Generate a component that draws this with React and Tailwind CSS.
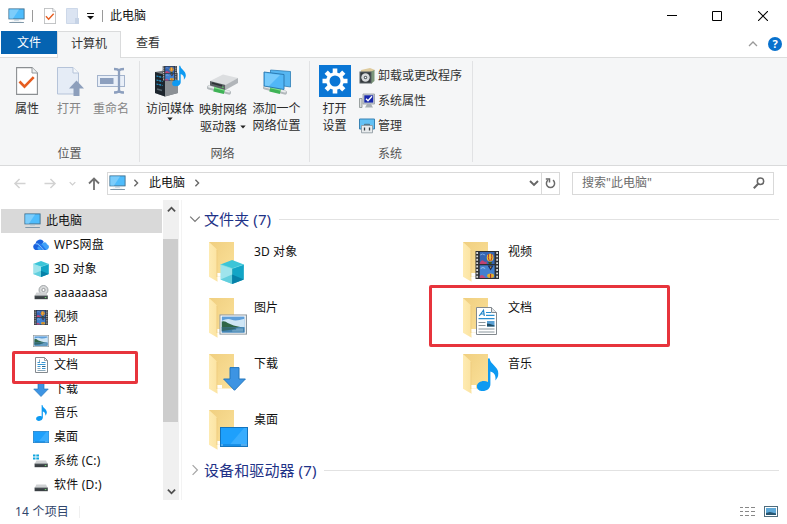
import React from "react";

const FONT =
  "font-['Noto_Sans','Noto_Sans_CJK_SC',sans-serif]";

/* ---------- Artwork ---------- */

function Monitor({ className }) {
  return (
    <svg className={className} viewBox="0 0 17 16" preserveAspectRatio="none">
      <rect x="0.9" y="0.9" width="15.2" height="10" fill="#4ebcfc" stroke="#41708f" strokeWidth="0.9" />
      <path d="M1.4 10.4V1.4H11L5 10.4Z" fill="#7dcdfb" />
      <path d="M6.5 11.5h4l.5 1h-5z" fill="#9ab7cb" />
      <path d="M1.3 14.500h14.6" stroke="#7f97a8" strokeWidth="1" />
      <path d="M3.6 13.1h9.8" stroke="#d7dfe4" strokeWidth="0.6" />
    </svg>
  );
}

function Cube(props) {
  return (
    <svg viewBox="0 0 24 24" {...props}>
      <path d="M0.3 4.4 12 0l11.7 4.4L12 8.5Z" fill="#3cc5d8" />
      <path d="M0.3 4.4 12 8.5V24L0.3 19.5Z" fill="#9fe4ec" />
      <path d="M0.3 19.5 12 14.5V24Z" fill="#62cfde" />
      <path d="M23.7 4.4 12 8.5V24l11.7-4.5Z" fill="#12a5c6" />
      <path d="M12 14.5l11.7 5L12 24Z" fill="#0781a8" />
      <path d="M0.3 4.4 12 8.5l11.7-4.1" stroke="#6adbe7" strokeWidth=".6" fill="none" />
    </svg>
  );
}

function Picture(props) {
  return (
    <svg viewBox="0 0 28 21" preserveAspectRatio="none" {...props}>
      <rect x=".6" y=".6" width="26.800" height="19.800" fill="#fff" stroke="#8c969d" strokeWidth="1.200" />
      <rect x="2.500" y="2.300" width="23" height="16.400" fill="#5f9fda" />
      <path d="M2.500 6.500q6-3 10-1t13-1V13h-23Z" fill="#cfe6f5" />
      <path d="M2.500 7.500q3.500-1 6 1.500l6 2.500 9 2h-21Z" fill="#2f6545" />
      <path d="M2.500 13.200h23v5.500h-23Z" fill="#4484b0" />
      <path d="M2.500 13l17 .6-6 2-11 1.400Z" fill="#34696c" />
      <path d="M13 17h11M17 15.200h7" stroke="#b8d7e5" strokeWidth=".6" />
    </svg>
  );
}

function DownArrow(props) {
  return (
    <svg viewBox="0 0 24 24" {...props}>
      <path d="M7.5.6h9V12h6.4L12 23.3 1.1 12h6.4Z" fill="#3d94e3" stroke="#2276bd" strokeWidth="1" />
    </svg>
  );
}

function Desktop(props) {
  return (
    <svg viewBox="0 0 28 20" preserveAspectRatio="none" {...props}>
      <rect x=".5" y=".5" width="27" height="19" fill="#1ea0fc" stroke="#1474bd" />
      <path d="M10 17.5 24 1h3v16.5Z" fill="#39adfe" />
      <path d="M1 18h26" stroke="#0f7dd2" />
      <path d="M1.5 18h1M21.5 18h1M23.5 18h1M25.5 18h1" stroke="#fff" />
    </svg>
  );
}

function Film(props) {
  return (
    <svg viewBox="0 0 24 28" preserveAspectRatio="none" {...props}>
      <rect width="24" height="28" fill="#2d2f33" />
      <path d="M1.900 1v26.500M22.100 1v26.500" stroke="#d9dbdc" strokeWidth="1.800" strokeDasharray="1.900 1.500" />
      <rect x="4.500" y="1" width="15" height="12" fill="#3565b4" />
      <rect x="4.500" y="14.300" width="15" height="12.700" fill="#4380cf" />
      <path d="M4.500 12q2-4 4-2t3 0v3h-7Z" fill="#c04272" />
      <path d="M5 4q2-2 5 0" stroke="#7ea8dd" fill="none" />
      <ellipse cx="15" cy="6.500" rx="3.400" ry="4" fill="#eec23a" />
      <path d="M13.500 3q-1 4 .8 7M16.500 3q1 4-.8 7" stroke="#b5342c" fill="none" />
      <path d="M13 11h4l-.8 2h-2.400Z" fill="#39551f" />
      <path d="M12.500 14.500h6l-3 5Z" fill="#1c2b58" />
      <path d="M14.500 15.500h2l-1 2Z" fill="#d59b38" />
      <ellipse cx="15.500" cy="24.800" rx="3.500" ry="2.200" fill="#e4ae2e" />
      <path d="M15.500 23v4" stroke="#a3262b" />
      <path d="M4.500 25q3-3 6 2h-6Z" fill="#c24b7a" />
      <path d="M5.500 17.500q2-2 4.500 0" stroke="#9fc4ec" fill="none" />
    </svg>
  );
}

function Doc(props) {
  return (
    <svg viewBox="0 0 21 28" preserveAspectRatio="none" {...props}>
      <path d="M.5.5h15l5 5v22H.5Z" fill="#fff" stroke="#83898e" />
      <path d="M15.5.5v5h5" fill="#e5e8ea" stroke="#83898e" />
      <path d="M3.200 9 7.500 3.200 8.300 9M4.800 7h3.300" stroke="#1d83c8" strokeWidth="1.200" fill="none" />
      <path d="M10 5.500h5" stroke="#2a8ecf" strokeWidth="1" />
      <path d="M10 8.300h8.500M2.500 11.700h16" stroke="#2a8ecf" strokeWidth="1.300" />
      <path d="M2.500 15.500h7M2.500 18.500h7M2.500 22h16M2.500 25h16" stroke="#7d8a92" strokeWidth=".9" />
      <rect x="11" y="14" width="7.500" height="5.500" fill="#5aa1d5" />
      <path d="M11 19.500v-3l3 .5 4.500 1.500v1Z" fill="#214d64" />
    </svg>
  );
}

/* The tree's 16px document glyph has fewer, heavier rules than the large one. */
function SmallDoc({ className }) {
  return (
    <svg className={className} viewBox="0 0 13 16">
      <path d="M.5.5h9l3 3v12H.5Z" fill="#fff" stroke="#83898e" />
      <path d="M9.500.5v3h3" fill="none" stroke="#83898e" strokeWidth=".8" />
      <path d="M2.500 5.500h2.500M6.500 5.500h4M2.500 7.500h8M2.500 9.500h3M7 11.500h3.500" stroke="#3a98d4" />
      <path d="M7 9.500h3.500" stroke="#2a6188" />
      <path d="M4.500 2.500v3M2.500 11.500h3M2.500 13.500h8" stroke="#6d93a9" strokeWidth=".8" />
    </svg>
  );
}

function Note(props) {
  return (
    <svg viewBox="0 0 22 33" preserveAspectRatio="none" {...props}>
      <path
        d="M11.3 0h1.6c.4 6 8.8 8.2 8.8 15.2 0 3.2-1.5 5.2-3 7 .8-5.2-1.6-8.2-5-9V26c0 4-3.5 6.8-7.7 6.8C2.600 32.800.2 31 .2 28.200c0-3.300 3.400-5.500 7-5.500 1.500 0 3 .3 4.100.9Z"
        fill="#0d9af2"
      />
    </svg>
  );
}

function Folder({ children }) {
  return (
    <svg className="size-12 shrink-0" viewBox="0 0 48 48">
      <defs>
        <linearGradient id="folderBack" x1="0" y1="0" x2="1" y2="1">
          <stop offset="0" stopColor="#f0cf80" />
          <stop offset="1" stopColor="#fbe19a" />
        </linearGradient>
        <linearGradient id="folderFlap" x1="0" y1="0" x2="1" y2="0">
          <stop offset="0" stopColor="#feebb2" />
          <stop offset="1" stopColor="#fbe3a1" />
        </linearGradient>
      </defs>
      <path d="M1 2h25v34.500H9L1 36Z" fill="url(#folderBack)" />
      <path d="M9 33h5v3.500H9Z" fill="#fff" />
      <path d="M1 2l6.800 6.300q1.200 1.100 1.200 3v19.700l.6 10.700L1 36.800Z" fill="url(#folderFlap)" />
      <path d="M8.900 10v27" stroke="#ecc978" strokeWidth=".7" />
      {children}
    </svg>
  );
}

function Cloud({ className }) {
  return (
    <svg className={className} viewBox="0 0 16 16">
      <path d="M3.600 13A3.400 3.400 0 0 1 2.500 6.400 4.600 4.600 0 0 1 10.700 4.400L6 13Z" fill="#1a62dd" />
      <path d="M6.200 13q-2-.3-1.800-2.500L9.500 6q3.500-2 4.500 1.200A3 3 0 0 1 12.800 13Z" fill="#3fa0f8" />
      <path d="M3 6q4-1 7.500 3.500L13.500 13H9L5.500 9Z" fill="#2379ec" />
      <path d="M2.500 6.800q2.500-.6 4.500 2.200l3.500 4" stroke="#a5d1fc" strokeWidth=".8" fill="none" />
    </svg>
  );
}

function Drive({ className, kind }) {
  return (
    <svg className={className} viewBox="0 0 16 16">
      {kind === "disc" && (
        <g>
          <circle cx="10.500" cy="5" r="4.500" fill="#d9dbdc" stroke="#8f9497" strokeWidth=".8" />
          <circle cx="10.500" cy="5" r="1.600" fill="#fff" stroke="#85898b" strokeWidth=".8" />
        </g>
      )}
      {kind === "windows" && (
        <path d="M0 1.500h2.500v2H0ZM3.300 1.500h2.700v2H3.300ZM0 4.400h2.500v2.200H0ZM3.300 4.400h2.700v2.200H3.300Z" fill="#10a5dd" />
      )}
      <path d="M3.400 7.500h9.600l1.800 3.400H1.600Z" fill="#cfd1d3" />
      <path d="M1.600 10.800h13.200v3.400H1.600Z" fill="#3b4044" />
      <path d="M1.600 10.800h13.200" stroke="#80868a" strokeWidth=".6" />
      <path d="M11.800 12.600h1.500" stroke="#76df79" strokeWidth="1" />
    </svg>
  );
}

function PropertiesIcon({ className }) {
  return (
    <svg className={className} viewBox="0 0 22 28" preserveAspectRatio="none">
      <path d="M.600.600H16l5.400 5.400v21.400H.600Z" fill="#fff" stroke="#8b8f92" strokeWidth="1.100" />
      <path d="M16 .600V6h5.400" fill="#edf0f1" stroke="#8b8f92" strokeWidth=".9" />
      <path d="M3.500 14.500l5 5.200 9.200-9.500" fill="none" stroke="#e65d20" strokeWidth="2.600" />
    </svg>
  );
}

function OpenIcon() {
  return (
    <svg className="h-[32px] w-[30px]" viewBox="0 0 30 32">
      <path d="M3.500 2.500H19L24.500 8v21h-21Z" fill="#e5ecf6" stroke="#b5c3d9" />
      <path d="M19 2.500V8h5.500" fill="#f5f8fb" stroke="#b5c3d9" />
      <path d="M22.500 15.500 30 23.500h-4.500V31h-6v-7.500H15Z" fill="#8d9fbc" />
    </svg>
  );
}

function RenameIcon() {
  return (
    <svg className="h-[32px] w-[30px]" viewBox="0 0 30 32">
      <rect x="1.500" y="10.500" width="27" height="11" fill="#e9eff8" stroke="#a3b3cc" />
      <rect x="4" y="13" width="13.500" height="6" fill="#8c9fbe" />
      <path d="M18 4q4 0 5 1.500Q24 4 28 4M23 5v21M18 27.500q4 0 5-1.500 1 1.500 5 1.500" fill="none" stroke="#8c9fbe" strokeWidth="2.300" />
    </svg>
  );
}

function MediaIcon() {
  return (
    <svg className="h-[32px] w-[32px]" viewBox="0 0 32 32">
      <path d="M1 7l12-2 11 3v20l-13 3.500L1 28Z" fill="#777c81" />
      <path d="M1 7l10 3v21.500L1 28Z" fill="#1d252d" />
      <path d="M11 10l13-2v20l-13 3.500Z" fill="#8b9095" />
      <path d="M2.500 11l6 1.500M2.500 15l6 1.500M2.500 19l6 1.500" stroke="#28a2dd" strokeWidth="1.200" strokeDasharray="2 .8" />
      <path d="M3 24l5 1.500" stroke="#56666f" strokeWidth="1.500" />
      <Film x="8.500" y="1" width="14.500" height="15" />
      <Note x="18" y=".5" width="14" height="21" />
    </svg>
  );
}

function NetPipe() {
  return (
    <g>
      <path d="M3 22.500l20 5" stroke="#b3b9bc" strokeWidth="4.200" strokeLinecap="round" />
      <path d="M3 21.700l20 5" stroke="#e9eced" strokeWidth="1.800" strokeLinecap="round" />
      <path d="M8 23.800l10.500 2.600" stroke="#3fb356" strokeWidth="5.500" />
      <path d="M8.300 22.400l10.500 2.600" stroke="#83e18c" strokeWidth="1.800" />
    </g>
  );
}

function MapDriveIcon() {
  return (
    <svg className="h-[32px] w-[34px]" viewBox="0 0 34 32">
      <NetPipe />
      <path d="M4 16 17 9.500l15 3.500-12.500 7.500Z" fill="#dcdee0" />
      <path d="M4 16l15.500 4v5L4 20.500Z" fill="#5b6064" />
      <path d="M19.500 20 32 13v5l-12.500 7Z" fill="#b1b5b9" />
      <path d="M6 18l10 2.700" stroke="#2c3033" strokeWidth="1.500" />
      <path d="M16 22l1.500.5" stroke="#57dc63" strokeWidth="1.300" />
    </svg>
  );
}

function AddLocationIcon() {
  return (
    <svg className="h-[32px] w-[30px]" viewBox="0 0 30 32">
      <NetPipe />
      <path d="M8.500 5l20 1.500v15.500l-20-3Z" fill="#56b6f1" stroke="#2d7eb5" strokeWidth=".8" />
      <path d="M2 7l20 2.500v15L2 21Z" fill="#51b7f7" stroke="#2875ac" strokeWidth=".9" />
      <path d="M3 8l15 2L7 21l-4-.6Z" fill="#78cbfc" />
    </svg>
  );
}

function SettingsTile() {
  return (
    <svg className="size-[32px]" viewBox="0 0 32 32">
      <rect width="32" height="32" fill="#0a76d5" />
      <g stroke="#fff" strokeWidth="4.600">
        <path d="M16 3.500v25M3.500 16h25M7.200 7.200l17.600 17.600M24.800 7.200 7.200 24.800" />
      </g>
      <circle cx="16" cy="16" r="8.800" fill="#fff" />
      <circle cx="16" cy="16" r="5.500" fill="#0a76d5" />
    </svg>
  );
}

function UninstallIcon() {
  return (
    <svg className="size-4" viewBox="0 0 16 16">
      <path d="M2 2l9-2 5 2-3 4H2Z" fill="#dfcb9d" />
      <path d="M11 4l4.500-2v11L12 16Z" fill="#7c967a" />
      <rect x="1" y="4" width="11" height="11" fill="#34393c" stroke="#596064" />
      <circle cx="6.500" cy="9.500" r="4.200" fill="#d6d8da" />
      <circle cx="6.500" cy="9.500" r="1.700" fill="#535a5e" />
      <circle cx="6.500" cy="9.500" r=".8" fill="#fff" />
    </svg>
  );
}

function SysPropIcon() {
  return (
    <svg className="size-4" viewBox="0 0 16 16">
      <path d="M.5 5.500h2.500v9H.5Z" fill="#d9dcda" stroke="#868e8e" strokeWidth=".8" />
      <path d="M4 1h11.500v10H4Z" fill="#c8cdd2" stroke="#959da4" strokeWidth=".8" />
      <path d="M5.300 2.300h8.900v7.300H5.300Z" fill="#1727ad" />
      <path d="M7 5.800l2 2 4-4.500" stroke="#fff" strokeWidth="1.400" fill="none" />
      <path d="M8 11h4l2 3.500H6Z" fill="#a8afb4" />
    </svg>
  );
}

function ManageIcon() {
  return (
    <svg className="size-4" viewBox="0 0 16 16">
      <path d="M.5 1h15v10H.5Z" fill="#62c1f5" stroke="#3983b4" />
      <path d="M5.500 7.500V6.300h5v1.200" stroke="#536975" fill="none" />
      <path d="M2.500 7.500h11v7.300h-11Z" fill="#e8ebed" stroke="#88939a" strokeWidth=".8" />
      <path d="M5.500 9.500v3M10.500 9.500v3" stroke="#394247" strokeWidth="1.300" />
    </svg>
  );
}

function Chevron({ dir, className, w = 1.3 }) {
  const d = {
    down: "M1 3l4 4 4-4",
    up: "M1 7l4-4 4 4",
    right: "M3 1l4 4-4 4",
  }[dir];
  return (
    <svg className={className} viewBox="0 0 10 10" fill="none" stroke="currentColor" strokeWidth={w}>
      <path d={d} />
    </svg>
  );
}

function Arrow({ className, flip }) {
  return (
    <svg className={className} viewBox="0 0 14 12" fill="none" stroke="currentColor" strokeWidth="1.600">
      <path d={flip ? "M1 6h11.500M7.500 1l5 5-5 5" : "M13 6H1.500M6.500 1l-5 5 5 5"} />
    </svg>
  );
}

function Caret({ className }) {
  return (
    <svg className={className} viewBox="0 0 6 4">
      <path d="M.3.500h5.400L3 3.500Z" fill="#222" />
    </svg>
  );
}

/* ---------- Window pieces ---------- */

function TitleBar() {
  return (
    <div className="flex h-[31px] items-center pl-2">
      <Monitor className="h-4 w-[17px]" />
      <div className="ml-[7px] h-3 w-px bg-[#9a9a9a]" />
      <PropertiesIcon className="ml-[11px] h-4 w-3" />
      <svg className="ml-[10px] h-4 w-[13px]" viewBox="0 0 13 16">
        <path d="M.5.500h11v15H.5Z" fill="#dbe4f2" stroke="#cdd8e9" />
        <path d="M9 10h4v6H9Z" fill="#c6d3e6" />
      </svg>
      <svg className="mt-px ml-2 h-[7px] w-[7px]" viewBox="0 0 7 7">
        <path d="M0 .500h7" stroke="#111" />
        <path d="M0 3h7L3.500 6.500Z" fill="#111" />
      </svg>
      <div className="ml-2 h-3 w-px bg-[#9a9a9a]" />
      <span className="ml-[7px]">此电脑</span>
      <div className="ml-auto flex items-center text-black">
        <svg className="h-[11px] w-[11px]" viewBox="0 0 11 11"><path d="M0 5.500h10" stroke="currentColor" /></svg>
        <svg className="ml-[34px] h-[10px] w-[10px]" viewBox="0 0 10 10"><path d="M.500.500h9v9h-9Z" fill="none" stroke="currentColor" /></svg>
        <svg className="mr-[19px] ml-[36px] h-[10px] w-[10px]" viewBox="0 0 10 10"><path d="M0 0l10 10M10 0 0 10" stroke="currentColor" strokeWidth="1.100" /></svg>
      </div>
    </div>
  );
}

function Tabs() {
  return (
    <div className="flex h-[27px] border-b border-[#dcdddd] pl-px">
      <div className="flex h-[23px] w-14 items-center justify-center bg-[#0563b1] pt-px text-white">文件</div>
      <div className="flex h-[27px] w-16 items-center justify-center border border-b-0 border-[#dadbdc] bg-[#f5f6f7] pb-0.5 text-[#333]">计算机</div>
      <div className="flex w-[54px] items-center justify-center pb-0.5 text-[#333]">查看</div>
      <div className="ml-auto flex items-center pr-[5px]">
        <Chevron dir="up" className="size-[10px] text-[#999]" />
        <div className="ml-[10px] flex size-[14px] items-center justify-center rounded-full bg-[#0871cd] text-[11px] font-bold text-white">?</div>
      </div>
    </div>
  );
}

function BigButton({ icon, lines, width, muted, caret, gap = "mt-0" }) {
  return (
    <div className={`flex flex-col items-center ${width} ${muted ? "text-[#858585]" : "text-[#2b2b2b]"}`}>
      <div className="flex h-8 items-center">{icon}</div>
      <div className={`flex flex-col items-center leading-[17px] whitespace-nowrap ${gap}`}>{lines}</div>
      {caret && <Caret className="h-1 w-1.5" />}
    </div>
  );
}

function Group({ label, width, inset = "", children }) {
  return (
    <div className={`flex flex-col pt-[7px] ${width}`}>
      <div className={`flex h-[81px] ${inset}`}>{children}</div>
      <div className="text-center leading-4 text-[#555]">{label}</div>
    </div>
  );
}

function Separator() {
  return <div className="mt-[3px] h-[101px] w-px bg-[#e1e2e4]" />;
}

function Ribbon() {
  const small = [
    [<UninstallIcon />, "卸载或更改程序"],
    [<SysPropIcon />, "系统属性"],
    [<ManageIcon />, "管理"],
  ];
  return (
    <div className="flex h-[108px] border-b border-[#d9dadb] bg-[#f5f6f7]">
      <Group label="位置" width="w-[139px]" inset="pl-[6px]">
        <BigButton icon={<PropertiesIcon className="h-7 w-[22px]" />} lines="属性" width="w-[42px]" gap="mt-[3px]" />
        <BigButton icon={<OpenIcon />} lines="打开" width="w-[42px]" muted gap="mt-[3px]" />
        <BigButton icon={<RenameIcon />} lines="重命名" width="w-[42px]" muted gap="mt-[3px]" />
      </Group>
      <Separator />
      <Group label={<span className="mr-1">网络</span>} width="w-[169px]" inset="pl-[4px]">
        <BigButton icon={<MediaIcon />} lines="访问媒体" width="w-[52px]" caret gap="mt-[3px]" />
        <BigButton
          icon={<MapDriveIcon />}
          width="w-[54px]"
          gap="mt-[4px]"
          lines={
            <>
              <span>映射网络</span>
              <span className="flex items-center gap-1">驱动器<Caret className="h-1 w-1.5" /></span>
            </>
          }
        />
        <BigButton icon={<AddLocationIcon />} width="w-[53px]" gap="mt-[3px]" lines={<><span>添加一个</span><span>网络位置</span></>} />
      </Group>
      <Separator />
      <Group label={<span className="mr-0.5">系统</span>} width="w-[162px]">
        <BigButton icon={<SettingsTile />} width="w-[49px]" gap="mt-[3px]" lines={<><span>打开</span><span>设置</span></>} />
        <div className="flex flex-col">
          {small.map(([icon, text]) => (
            <div key={text} className="flex h-[25px] items-center gap-[3px] pb-[3px] whitespace-nowrap text-[#333]">
              {icon}
              {text}
            </div>
          ))}
        </div>
      </Group>
      <Separator />
    </div>
  );
}

function AddressBar() {
  return (
    <div className="flex h-[34px] items-center pl-[13px]">
      <Arrow className="h-[11px] w-[14px] text-[#d2d2d2]" />
      <Arrow flip className="ml-4 h-[11px] w-[14px] text-[#d2d2d2]" />
      <Chevron dir="down" className="ml-3 size-[7px] text-[#cecece]" w={1.800} />
      <svg className="ml-3 h-[13px] w-3 text-[#707070]" viewBox="0 0 12 13" fill="none" stroke="currentColor" strokeWidth="1.800">
        <path d="M6 13V1.500M1 6.500l5-5 5 5" />
      </svg>
      <div className="ml-[7px] flex h-[23px] w-[453px] items-center border border-[#d9d9d9] pl-px">
        <Monitor className="h-4 w-[17px]" />
        <Chevron dir="right" className="ml-1.5 size-[8px] text-[#666]" w={1.700} />
        <span className="ml-[9px]">此电脑</span>
        <Chevron dir="right" className="ml-2 size-[8px] text-[#666]" w={1.700} />
        <Chevron dir="down" className="ml-auto size-[10px] text-[#666]" w={1.900} />
        <div className="ml-[2px] flex h-full w-[18px] items-center justify-center border-l border-[#d9d9d9]">
          <svg className="size-[11px]" viewBox="0 0 11 11" fill="none" stroke="#6a6a6a" strokeWidth="1.500">
            <path d="M3 2.200A4.100 4.100 0 1 0 8 2.200" />
            <path d="M.800 1h3.700v3.600" />
          </svg>
        </div>
      </div>
      <div className="ml-3 flex h-[23px] w-[202px] items-center justify-between border border-[#d9d9d9] pr-2 pl-[9px] text-[#6d6d6d]">
        <span>搜索"此电脑"</span>
        <svg className="size-3" viewBox="0 0 12 12" fill="none" stroke="#666">
          <circle cx="7.500" cy="4.300" r="3.200" strokeWidth="1.500" />
          <path d="M5.200 6.800.800 11.200" strokeWidth="2" />
        </svg>
      </div>
    </div>
  );
}

const treeItems = [
  ["WPS网盘", <Cloud className="size-4" />],
  ["3D 对象", <Cube className="size-4" />],
  ["aaaaaasa", <Drive className="size-4" kind="disc" />],
  ["视频", <Film className="h-[15px] w-[14px]" />],
  ["图片", <Picture className="h-3 w-4" />],
  ["文档", <SmallDoc className="h-4 w-[13px]" />],
  ["下载", <DownArrow className="size-4" />],
  ["音乐", <Note className="h-4 w-[11px]" />],
  ["桌面", <Desktop className="h-3 w-4" />],
  ["系统 (C:)", <Drive className="size-4" kind="windows" />],
  ["软件 (D:)", <Drive className="size-4" />],
];

const treeTracking = {
  aaaaaasa: "tracking-[0.1px]",
  "WPS网盘": "tracking-[0.2px]",
  "系统 (C:)": "tracking-[0.2px]",
  "软件 (D:)": "tracking-[0.2px]",
};

function Sidebar() {
  return (
    <div className="relative flex w-[182px] border-r border-[#f3f3f3]">
      <div className="w-[162px] pt-[9px] pl-px">
        <div className="flex h-6 items-center bg-[#d9d9d9] pl-[23px]">
          <Monitor className="h-4 w-[17px]" />
          <span className="ml-[5px]">此电脑</span>
        </div>
        {treeItems.map(([name, icon]) => (
          <div key={name} className="flex h-6 items-center pl-8">
            <span className="flex w-4 justify-center">{icon}</span>
            <span className={`ml-[5px] ${treeTracking[name] ?? ""}`}>{name}</span>
          </div>
        ))}
      </div>
      <div className="ml-px flex w-4 flex-col items-center bg-[#f0f0f0]">
        <div className="flex h-[39px] pt-[5px]"><Chevron dir="up" className="size-[9px] text-[#505050]" w={2} /></div>
        <div className="h-[183px] w-[15px] self-start bg-[#cdcdcd]" />
        <div className="mt-auto mb-1"><Chevron dir="down" className="size-[9px] text-[#505050]" w={2} /></div>
      </div>
      <div className="absolute top-[151px] left-[12px] h-[33px] w-[126px] rounded-[2px] border-3 border-[#e7343c]" />
    </div>
  );
}

const tiles = [
  ["3D 对象", <Cube x="12" y="20" width="24.300" height="24" />],
  ["视频", <Film x="13.300" y="11" width="23.700" height="28" />],
  ["图片", <Picture x="11.300" y="18.300" width="27.700" height="20.500" />],
  ["文档", <Doc x="14" y="11" width="21" height="28" />],
  ["下载", <DownArrow x="14.500" y="15" width="24" height="24" />],
  ["音乐", <Note x="14.700" y="6.300" width="22" height="33" />],
  ["桌面", <Desktop x="12" y="19" width="28" height="20" />],
];

function SectionHeading({ open, children }) {
  return (
    <div className="flex h-6 items-center text-[15px] text-[#1e3287]">
      <Chevron dir={open ? "down" : "right"} className={`size-3 ${open ? "text-[#777]" : "text-[#a5a5a5]"}`} w={1} />
      <span className="ml-[3px] tracking-[0.1px] whitespace-nowrap">{children}</span>
      <div className="ml-2 h-px flex-1 bg-[#e2e2e2]" />
    </div>
  );
}

function Content() {
  return (
    <div className="relative flex-1 pt-[7px] pr-2 pl-[7px]">
      <SectionHeading open>文件夹 (7)</SectionHeading>
      <div className="mt-[9px] grid grid-cols-[254px_254px] pl-[19px]">
        {tiles.map(([name, art]) => (
          <div key={name} className="flex h-14">
            <Folder>{art}</Folder>
            <span className="mt-[3px] -ml-0.5 leading-[18px] tracking-[0.1px]">{name}</span>
          </div>
        ))}
      </div>
      <div className="-mt-[6px]">
        <SectionHeading>设备和驱动器 (7)</SectionHeading>
      </div>
      <div className="absolute top-[85px] left-[247px] h-[62px] w-[241px] rounded-[2px] border-3 border-[#e7343c]" />
    </div>
  );
}

function StatusBar() {
  return (
    <div className="flex h-6 items-center pb-px pl-[15px] text-[#30456b]">
      <span className="tracking-[0.2px]">14 个项目</span>
      <div className="ml-2.5 h-3 w-px bg-[#f0f0f0]" />
      <svg className="mr-[8px] ml-auto h-[11px] w-[16px]" viewBox="0 0 16 11">
        <path d="M0 1.500h3M0 5.500h3M0 9.500h3M5 1.500h4M5 5.500h4M5 9.500h4M11 1.500h4M11 5.500h4M11 9.500h4" stroke="#888" />
      </svg>
      <svg className="mr-[9px] h-[11px] w-[14px]" viewBox="0 0 14 11">
        <rect x=".5" y=".5" width="13" height="10" fill="#fff" stroke="#4f6c7d" />
        <rect x="2" y="2" width="10" height="7" fill="#5fa9d8" />
        <path d="M2 9V7l4-1 6 1.500V9Z" fill="#275571" />
      </svg>
    </div>
  );
}

export default function App() {
  return (
    <div className={`flex h-[524px] w-[787px] flex-col overflow-hidden bg-white text-xs text-[#111] ${FONT}`}>
      <TitleBar />
      <Tabs />
      <Ribbon />
      <AddressBar />
      <div className="flex h-[300px]">
        <Sidebar />
        <Content />
      </div>
      <StatusBar />
    </div>
  );
}
